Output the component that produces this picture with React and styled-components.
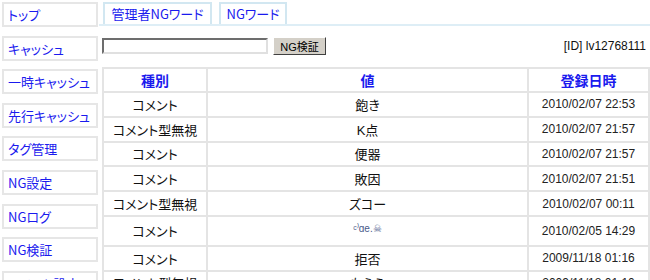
import styled, { createGlobalStyle } from "styled-components";

const GlobalStyle = createGlobalStyle`
  body {
    margin: 0;
    background: #fff;
    font-family: "Liberation Sans", "Noto Sans CJK JP", sans-serif;
    font-feature-settings: "palt";
    font-size: 13px;
    color: #000;
  }
`;

const menu = [
  "トップ",
  "キャッシュ",
  "一時キャッシュ",
  "先行キャッシュ",
  "タグ管理",
  "NG設定",
  "NGログ",
  "NG検証",
  "コメント設定",
];

const rows = [
  { kind: "コメント", value: "飽き", date: "2010/02/07 22:53" },
  { kind: "コメント型無視", value: "K点", date: "2010/02/07 21:57" },
  { kind: "コメント", value: "便器", date: "2010/02/07 21:57" },
  { kind: "コメント", value: "敗因", date: "2010/02/07 21:51" },
  { kind: "コメント型無視", value: "ズコー", date: "2010/02/07 00:11" },
  { kind: "コメント", value: "ᶜ⁾ɑe.☠", date: "2010/02/05 14:29", tall: true },
  { kind: "コメント", value: "拒否", date: "2009/11/18 01:16" },
  { kind: "コメント型無視", value: "もらう", date: "2009/11/18 01:10" },
];

export default function App() {
  return (
    <Page>
      <GlobalStyle />
      <Sidebar>
        {menu.map((m) => (
          <MenuItem key={m}>{m}</MenuItem>
        ))}
      </Sidebar>
      <Main>
        <Tabs>
          <Tab $w={109}>管理者NGワード</Tab>
          <Tab $w={68}>NGワード</Tab>
        </Tabs>
        <Toolbar>
          <SearchInput type="text" />
          <CheckButton>NG検証</CheckButton>
          <UserId>[ID] lv12768111</UserId>
        </Toolbar>
        <Table>
          <colgroup>
            <col style={{ width: 104 }} />
            <col style={{ width: 321 }} />
            <col style={{ width: 121 }} />
          </colgroup>
          <thead>
            <tr>
              <Th>種別</Th>
              <Th>値</Th>
              <Th>登録日時</Th>
            </tr>
          </thead>
          <tbody>
            {rows.map((r, i) => (
              <Row key={i} $tall={r.tall}>
                <Td>{r.kind}</Td>
                <Td>{r.tall ? <Emo>{r.value}</Emo> : r.value}</Td>
                <DateTd>{r.date}</DateTd>
              </Row>
            ))}
          </tbody>
        </Table>
      </Main>
    </Page>
  );
}

const Page = styled.div`
  display: flex;
  width: 650px;
  height: 280px;
  overflow: hidden;
`;

const Sidebar = styled.nav`
  width: 96px;
  flex-shrink: 0;
  padding: 2px 0 0 2px;
  display: flex;
  flex-direction: column;
  gap: 8.6px;
`;

const MenuItem = styled.div`
  height: 25px;
  box-sizing: border-box;
  border: 2px solid #e6e6e6;
  padding: 0 4px;
  display: flex;
  align-items: center;
  color: #1a1aee;
  font-family: "Noto Sans CJK JP", sans-serif;
  font-size: 13px;
  white-space: nowrap;
  flex-shrink: 0;
`;

const Main = styled.div`
  flex: 1;
  padding-left: 4px;
  padding-top: 2px;
  display: flex;
  flex-direction: column;
  min-width: 0;
`;

const Tabs = styled.div`
  display: flex;
  gap: 7px;
  height: 22px;
  margin-left: -3px;
  padding-left: 4px;
  border-bottom: 2px solid #deeef6;
`;

const Tab = styled.div`
  width: ${(p) => p.$w}px;
  box-sizing: border-box;
  border: 2px solid #d2e7f1;
  border-bottom: none;
  display: flex;
  align-items: center;
  justify-content: center;
  padding-bottom: 1px;
  color: #1a1aee;
  font-family: "Noto Sans CJK JP", sans-serif;
  font-size: 13px;
`;

const Toolbar = styled.div`
  display: flex;
  align-items: center;
  margin-top: 11px;
  height: 18px;
  padding-right: 4px;
`;

const SearchInput = styled.input`
  width: 166px;
  height: 16px;
  box-sizing: border-box;
  border: 2px solid;
  border-color: #6d6d6d #e0e0e0 #e0e0e0 #6d6d6d;
  padding: 0 2px;
  margin: 0;
  outline: none;
`;

const CheckButton = styled.button`
  margin-left: 5px;
  width: 53px;
  height: 18px;
  box-sizing: border-box;
  background: #d4d0c8;
  border: 1px solid;
  border-color: #fff #404040 #404040 #fff;
  font-family: "Liberation Sans", "Noto Sans CJK JP", sans-serif;
  font-size: 11px;
  padding: 0;
  color: #000;
`;

const UserId = styled.span`
  margin-left: auto;
  font-size: 12px;
  color: #111;
`;

const Table = styled.table`
  margin-top: 12px;
  width: 546px;
  border-collapse: collapse;
  table-layout: fixed;
  border: 2px solid #e4e4e4;
`;

const Th = styled.th`
  height: 22px;
  padding: 0;
  border: 2px solid #e4e4e4;
  color: #1a1aee;
  font-family: "Noto Sans CJK JP", sans-serif;
  font-size: 14px;
  font-weight: bold;
  text-align: center;
`;

const Row = styled.tr`
  height: ${(p) => (p.$tall ? 29.8 : 24.8)}px;
`;

const Td = styled.td`
  padding: 0;
  border: 2px solid #e4e4e4;
  text-align: center;
  font-family: "Liberation Sans", "Noto Sans CJK JP", sans-serif;
  font-size: 13px;
  color: #111;
  white-space: nowrap;
`;

const DateTd = styled(Td)`
  font-size: 12px;
  color: #222;
`;

const Emo = styled.span`
  font-size: 10px;
  color: #4a5a8a;
  position: relative;
  top: -3px;
`;
